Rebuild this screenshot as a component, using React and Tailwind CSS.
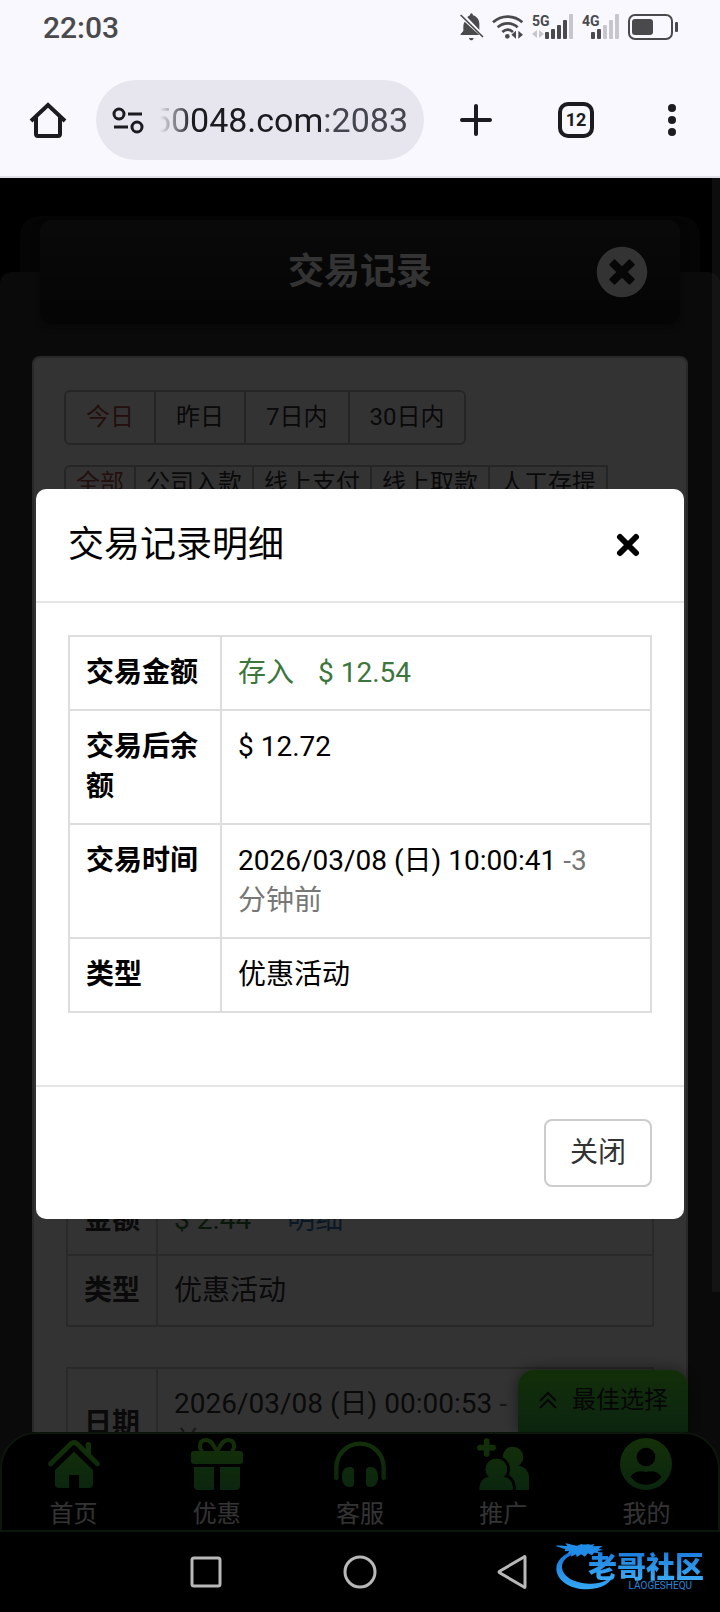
import React from "react";
import { FaTimesCircle } from "react-icons/fa";

const sans = "font-[Roboto,'Noto_Sans_CJK_SC',sans-serif]";

function BellOff() {
  return (
    <svg width="24" height="28" viewBox="0 0 72 84" aria-hidden="true">
      <path fill="#4a4a4d" d="M10 54V42c0-6 1-11 4-16L58 66H2v-3zM22 13c2-3 6-5 8-6 0-4 2-6 4-6s5 2 5 6c12 4 19 13 19 26v18zM27 75h14c-1 5-4 7-7 7s-6-2-7-7z" />
      <path stroke="#f9f8fe" strokeWidth="5" d="M6 3l67 66" />
      <path stroke="#4a4a4d" strokeWidth="5" d="M2 6l67 66" />
    </svg>
  );
}

function Wifi() {
  return (
    <svg width="32" height="26" viewBox="0 0 96 78" fill="none" aria-hidden="true">
      <g stroke="#4a4a4d" strokeWidth="8">
        <path d="M3 25C28 2 66 2 91 25" />
        <path d="M17 40c17-16 43-16 60 0" />
        <path d="M31 54c10-9 22-9 32 0" />
      </g>
      <circle cx="46" cy="67" r="7" fill="#4a4a4d" />
      <path fill="#4a4a4d" d="M72 50v24L58 62zM79 50v24l14-12z" />
    </svg>
  );
}

function Signal({ label, width, bars }) {
  return (
    <svg width={width} height="28" viewBox={"0 0 " + width + " 28"} overflow="visible" aria-hidden="true">
      <text x="0" y="13" fontSize="14" fontWeight="700" fill="#4a4a4d">{label}</text>
      {label === "5G" && <path fill="#c6c6cc" d="M5 17v8l-5-4zM7 17v8l5-4z" />}
      {bars.map((b) => (
        <rect key={b.x} x={b.x} y={26 - b.h} width="4" height={b.h} rx="1" fill={b.on ? "#4a4a4d" : "#c6c6cc"} />
      ))}
    </svg>
  );
}

const bars5 = [
  { x: 13, h: 7, on: true },
  { x: 19, h: 10, on: true },
  { x: 25, h: 14, on: true },
  { x: 31, h: 19, on: true },
  { x: 37, h: 25, on: false },
];
const bars4 = [
  { x: 9, h: 7, on: true },
  { x: 15, h: 10, on: true },
  { x: 21, h: 14, on: false },
  { x: 27, h: 19, on: false },
  { x: 33, h: 25, on: false },
];

function Battery() {
  return (
    <svg width="51" height="26" viewBox="0 0 51 26" fill="none" aria-hidden="true">
      <rect x="1" y="1" width="43" height="24" rx="6" stroke="#4a4a4d" strokeWidth="2" />
      <rect x="4" y="5" width="21" height="16" rx="3" fill="#4a4a4d" />
      <rect x="47" y="8" width="3" height="10" rx="1" fill="#4a4a4d" />
    </svg>
  );
}

function StatusBar() {
  return (
    <div className="flex h-14 items-center justify-between pr-[41px] pl-[43px]">
      <time className="text-[30px] leading-8 font-medium text-[#4a4a4d]">22:03</time>
      <div className="flex items-center gap-2 pb-0.5">
        <BellOff />
        <Wifi />
        <Signal label="5G" width={42} bars={bars5} />
        <Signal label="4G" width={38} bars={bars4} />
        <Battery />
      </div>
    </div>
  );
}

function BrowserBar() {
  return (
    <div className="flex items-center border-b-2 border-[#e1e0e6] pt-6 pb-4">
      <button aria-label="主页" className="flex w-24 justify-center">
        <svg width="38" height="38" viewBox="0 0 38 38" fill="none" stroke="#1b1b20" strokeWidth="4" aria-hidden="true">
          <path d="M2 20L19 4l17 16M7 16v17q0 2 2 2h20q2 0 2-2V16" />
        </svg>
      </button>
      <div className="flex h-20 min-w-0 flex-1 items-center rounded-full bg-[#e7e6ef] pr-4 pl-4">
        <svg width="32" height="32" viewBox="0 0 32 32" fill="none" stroke="#1b1b20" strokeWidth="3" className="shrink-0" aria-hidden="true">
          <circle cx="7" cy="10" r="5" />
          <circle cx="25" cy="23" r="5" />
          <path d="M16 10h14M2 23h14" />
        </svg>
        <button className="ml-4 flex min-w-0 flex-1 justify-end overflow-hidden [mask-image:linear-gradient(to_right,transparent,black_32px)] text-[34px] leading-[48px] whitespace-nowrap text-[#1b1b20]">
          <span>50048.com</span>
          <span className="text-[#45454f]">:2083</span>
        </button>
      </div>
      <button aria-label="新标签页" className="flex w-[104px] justify-center">
        <svg width="32" height="32" viewBox="0 0 32 32" stroke="#1b1b20" strokeWidth="4" strokeLinecap="round" aria-hidden="true">
          <path d="M16 2v28M2 16h28" />
        </svg>
      </button>
      <button aria-label="标签页" className="flex w-24 justify-center">
        <span className="flex size-9 items-center justify-center rounded-[10px] border-4 border-[#1b1b20] text-lg font-bold text-[#1b1b20]">12</span>
      </button>
      <button aria-label="更多" className="flex w-24 justify-center">
        <svg width="8" height="32" viewBox="0 0 8 32" fill="#1b1b20" aria-hidden="true">
          <circle cx="4" cy="4" r="4" />
          <circle cx="4" cy="16" r="4" />
          <circle cx="4" cy="28" r="4" />
        </svg>
      </button>
    </div>
  );
}

function Segments({ items, itemClass, groupClass }) {
  return (
    <div className={"flex w-max divide-x-2 divide-[#bbb] border-2 border-[#bbb] text-2xl text-[#333] " + groupClass}>
      {items.map((t, i) => (
        <button key={t} className={"leading-[33px] " + itemClass + (i === 0 ? " text-[#b04a45]" : "")}>{t}</button>
      ))}
    </div>
  );
}

const thBg = "border-2 border-[#ccc] px-4 py-[15px] text-left align-middle font-bold whitespace-nowrap text-[#333]";
const tdBg = "w-full border-2 border-[#ccc] px-4 py-[15px] align-top";

function Records() {
  return (
    <>
      <table className="mt-[681px] w-full border-collapse text-[28px] leading-[39px] text-[#333]">
        <tbody>
          <tr>
            <th className={thBg}>金额</th>
            <td className={tdBg}>
              <span className="mr-9 text-[#3c763d]">$ 2.44</span>
              <a href="#detail" className="text-[#337ab7]">明细</a>
            </td>
          </tr>
          <tr>
            <th className={thBg}>类型</th>
            <td className={tdBg}>优惠活动</td>
          </tr>
        </tbody>
      </table>
      <table className="mt-10 w-full border-collapse text-[28px] leading-[39px] text-[#333]">
        <tbody>
          <tr>
            <th className={thBg}>日期</th>
            <td className={tdBg}>
              2026/03/08 (日) 00:00:53{" "}
              <span className="text-[#777]">
                -<br />前
              </span>
            </td>
          </tr>
        </tbody>
      </table>
    </>
  );
}

function Icon({ children }) {
  return (
    <svg width="52" height="52" viewBox="0 0 156 156" aria-hidden="true">
      <defs>
        <linearGradient id="leaf" x1="0" y1="0" x2="0" y2="156" gradientUnits="userSpaceOnUse">
          <stop offset="0" stopColor="#64f02c" />
          <stop offset="1" stopColor="#36bc48" />
        </linearGradient>
      </defs>
      {children}
    </svg>
  );
}

const G = "url(#leaf)";

const tabs = [
  {
    name: "首页",
    icon: (
      <Icon>
        <path fill="none" stroke={G} strokeWidth="15" strokeLinecap="round" strokeLinejoin="round" d="M8 77L68 18q10-9 20 0l60 59" />
        <path fill={G} d="M113 18q0-6 8-6t8 6v34l-16-15zM78 41l57 55v42q0 12-12 12H93v-39H63v39H33q-12 0-12-12V96z" />
      </Icon>
    ),
  },
  {
    name: "优惠",
    icon: (
      <Icon>
        <path fill="none" stroke={G} strokeWidth="12" d="M35 40C22 32 24 6 45 6c19 0 24 22 33 34 9-12 14-34 33-34 21 0 23 26 10 34" />
        <rect y="39" width="156" height="39" rx="9" fill={G} />
        <path fill={G} d="M9 87h60v69H21q-12 0-12-12zM87 87h60v57q0 12-12 12H87z" />
      </Icon>
    ),
  },
  {
    name: "客服",
    icon: (
      <Icon>
        <path fill="none" stroke={G} strokeWidth="13" strokeLinecap="round" d="M7 120V88a71 71 0 0 1 142 0v32" />
        <path fill={G} d="M60 96q0-9-13-9C31 87 24 100 24 117s7 30 23 30q13 0 13-9zM96 96q0-9 13-9c16 0 23 13 23 30s-7 30-23 30q-13 0-13-9z" />
      </Icon>
    ),
  },
  {
    name: "推广",
    icon: (
      <Icon>
        <path stroke={G} strokeWidth="17" strokeLinecap="round" fill="none" d="M29 9v39.1M9 29h39.1" />
        <circle cx="108" cy="57" r="31" fill={G} />
        <path fill={G} d="M96 82c34-4 60 8 60 38v36H96z" />
        <g stroke="#000" strokeWidth="18" fill={G} paintOrder="stroke">
          <circle cx="58" cy="94" r="32" />
          <path d="M7 156c0-26 12-39 31-39h40c19 0 30 13 30 39z" />
        </g>
        <circle cx="58" cy="94" r="32" fill={G} />
      </Icon>
    ),
  },
  {
    name: "我的",
    icon: (
      <Icon>
        <path fill={G} fillRule="evenodd" d="M78 0a78 78 0 1 1 0 156A78 78 0 0 1 78 0zm0 29a28 28 0 1 0 0 56 28 28 0 0 0 0-56zM32 116c10 15 28 24 46 24s36-9 46-24c-9-14-27-19-46-14-19-5-37 0-46 14z" />
      </Icon>
    ),
  },
];

function TabBar() {
  return (
    <div className="bg-[#333]">
      <nav className="flex rounded-t-[36px] border-2 border-[#3e6e38] bg-black pt-1">
        {tabs.map((t) => (
          <a key={t.name} href={"#" + t.name} className="flex flex-1 flex-col items-center gap-2 text-2xl leading-8 text-white">
            {t.icon}
            {t.name}
          </a>
        ))}
      </nav>
    </div>
  );
}

function AccountPage() {
  return (
    <div className="flex min-h-0 flex-1 flex-col bg-black">
      <div className="relative min-h-0 flex-1 overflow-hidden pt-[38px]">
        <div className="mx-5 h-14 rounded-t-[20px] bg-[#191919] px-5 pt-1">
          <header className="relative z-10 grid h-[104px] grid-cols-[1fr_auto_1fr] items-center rounded-xl bg-linear-to-b from-[#303030] to-[#181818] px-8 shadow-[0_4px_8px_rgba(0,0,0,0.35)]">
            <h1 className="col-start-2 text-4xl font-bold text-white">交易记录</h1>
            <button aria-label="返回" className="justify-self-end text-white">
              <FaTimesCircle size={52} />
            </button>
          </header>
        </div>
        <div className="rounded-t-xl bg-[#333] px-8 pt-[84px]">
          <section className="rounded-lg border-2 border-[#ccc] bg-white px-8 pt-8">
            <Segments items={["今日", "昨日", "7日内", "30日内"]} groupClass="rounded-md -ml-0.5" itemClass="px-5 py-[9px]" />
            <Segments items={["全部", "公司入款", "线上支付", "线上取款", "人工存提"]} groupClass="rounded-tl-md mt-5 -ml-0.5" itemClass="px-[10px]" />
            <Records />
          </section>
        </div>
        <div className="absolute top-0 right-0 h-[1114px] w-2 bg-white/25" />
        <button className="absolute right-8 bottom-0 flex items-center gap-3.5 rounded-t-2xl bg-linear-to-b from-[#5ae828] to-[#38b84c] px-5 pt-3 pb-[14px] text-2xl leading-9 text-[#222] shadow-[0_0_16px_rgba(0,0,0,0.5)]">
          <svg width="20" height="18" viewBox="0 0 20 18" fill="none" stroke="#222" strokeWidth="2" aria-hidden="true">
            <path d="M2 10l8-8 8 8M2 17l8-8 8 8" />
          </svg>
          最佳选择
        </button>
      </div>
      <TabBar />
    </div>
  );
}

const th = "w-[152px] border-2 border-[#ddd] p-4 text-left align-top font-bold";
const td = "border-2 border-[#ddd] p-4 align-top";

function DetailDialog() {
  return (
    <div className="absolute inset-0 z-20 flex items-center justify-center bg-black/80 px-9 pb-0.5">
      <div role="dialog" aria-labelledby="detail-title" className="w-full rounded-[10px] bg-white text-black">
        <div className="flex items-center justify-between border-b-2 border-[#e5e5e5] p-8">
          <h2 id="detail-title" className="text-4xl leading-[48px]">交易记录明细</h2>
          <button aria-label="关闭明细" className="p-3">
            <svg width="24" height="24" viewBox="0 0 24 24" stroke="#000" strokeWidth="6" strokeLinecap="round" aria-hidden="true">
              <path d="M4 4l16 16M20 4L4 20" />
            </svg>
          </button>
        </div>
        <div className="px-8 pt-8 pb-[72px]">
          <table className="w-full table-fixed border-collapse text-[28px] leading-10">
            <tbody>
              <tr>
                <th className={th}>交易金额</th>
                <td className={td + " text-[#3c763d]"}>
                  <span className="mr-6">存入</span>$ 12.54
                </td>
              </tr>
              <tr>
                <th className={th}>交易后余额</th>
                <td className={td}>$ 12.72</td>
              </tr>
              <tr>
                <th className={th}>交易时间</th>
                <td className={td}>
                  2026/03/08 (日) 10:00:41 <span className="break-keep text-[#777]">-3 分钟前</span>
                </td>
              </tr>
              <tr>
                <th className={th}>类型</th>
                <td className={td}>优惠活动</td>
              </tr>
            </tbody>
          </table>
        </div>
        <div className="flex justify-end border-t-2 border-[#e5e5e5] p-8">
          <button className="rounded-lg border-2 border-[#ccc] px-6 py-3 text-[28px] leading-10 text-[#333]">关闭</button>
        </div>
      </div>
    </div>
  );
}

function Watermark() {
  return (
    <div className="absolute right-4 bottom-5 flex h-[52px] w-[150px] flex-col items-end justify-end">
      <svg className="absolute inset-0" width="150" height="52" viewBox="0 0 450 156" aria-hidden="true">
        <defs>
          <linearGradient id="sea" x1="0" y1="0" x2="0" y2="1">
            <stop offset="0" stopColor="#1673d6" />
            <stop offset="1" stopColor="#35a8f5" />
          </linearGradient>
        </defs>
        <path fill="url(#sea)" d="M62 32C26 42 7 62 7 86c1 36 42 63 95 62 40-2 70-18 78-46-12 18-42 30-74 29-44-1-80-20-82-49-1-18 14-34 44-42z" />
        <path fill="#218be8" d="M4 18c12-3 22 0 36 0l-6-8c12 2 22 6 36 7l12-5c10 4 16-2 28 2l12-2-6 7 30-1-12 8 14 4-18 3 10 7-20-2-6 8-12-6-10 10-10-7-14 8-2-8-16 7 4-10-14 1 6-8-14 1 2-7c-10-2-20-6-30-9z" />
      </svg>
      <div className="relative -mb-1 bg-linear-to-b from-[#1b7ddc] to-[#3fb0f8] bg-clip-text text-[29px] leading-8 font-black text-transparent">老哥社区</div>
      <div className="relative mr-3 text-[10px] leading-3 text-[#2488dd]">LAOGESHEQU</div>
    </div>
  );
}

function SystemNav() {
  return (
    <div className="relative flex h-20 items-center justify-center bg-black">
      <button aria-label="最近任务" className="flex w-[154px] justify-center">
        <svg width="32" height="32" viewBox="0 0 32 32" fill="none" stroke="#b8b8b8" strokeWidth="3" aria-hidden="true">
          <rect x="2" y="2" width="28" height="28" rx="2" />
        </svg>
      </button>
      <button aria-label="主屏幕" className="flex w-[154px] justify-center">
        <svg width="34" height="34" viewBox="0 0 34 34" fill="none" stroke="#b8b8b8" strokeWidth="3" aria-hidden="true">
          <circle cx="17" cy="17" r="15" />
        </svg>
      </button>
      <button aria-label="返回上一级" className="flex w-[154px] justify-center">
        <svg width="34" height="34" viewBox="0 0 34 34" fill="none" stroke="#b8b8b8" strokeWidth="3" strokeLinejoin="round" aria-hidden="true">
          <path d="M28 2v30q0 1-1 0L3 18q-2-1 0-2L27 2q1-1 1 0z" />
        </svg>
      </button>
      <Watermark />
    </div>
  );
}

export default function App() {
  return (
    <div className={"flex h-screen flex-col bg-[#f9f8fe] " + sans}>
      <StatusBar />
      <BrowserBar />
      <main className="relative flex min-h-0 flex-1 flex-col">
        <AccountPage />
        <DetailDialog />
      </main>
      <SystemNav />
    </div>
  );
}
